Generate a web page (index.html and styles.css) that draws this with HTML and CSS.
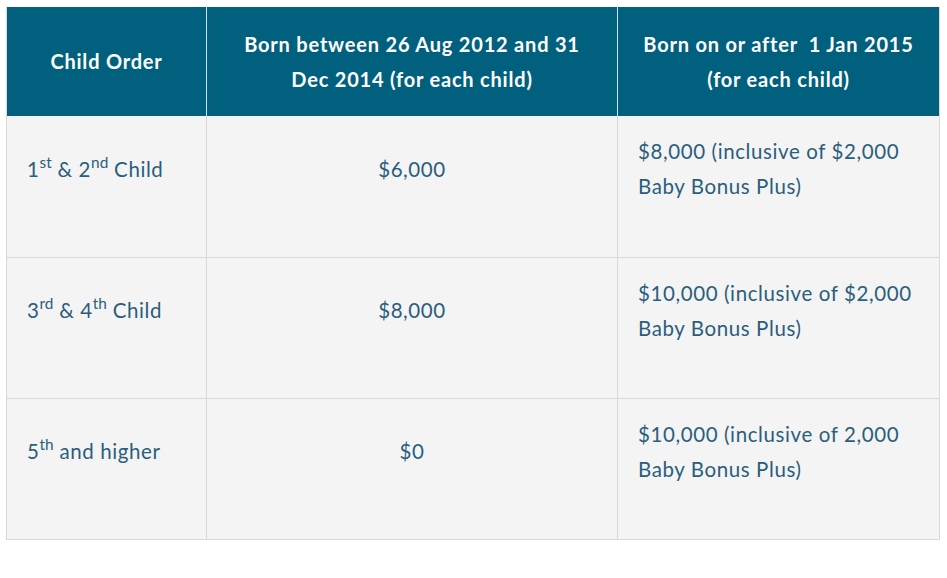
FILE: index.html
```html
<!DOCTYPE html>
<html>
<head>
<meta charset="utf-8">
<link rel="stylesheet" href="styles.css">
</head>
<body>
<table class="grant">
  <colgroup>
    <col class="c1"><col class="c2"><col class="c3">
  </colgroup>
  <thead>
    <tr>
      <th>Child Order</th>
      <th>Born between 26 Aug 2012 and 31<br>Dec 2014 (for each child)</th>
      <th>Born on or after&nbsp; 1 Jan 2015<br>(for each child)</th>
    </tr>
  </thead>
  <tbody>
    <tr>
      <td>1<sup>st</sup> &amp; 2<sup>nd</sup> Child</td>
      <td class="mid">$6,000</td>
      <td>$8,000 (inclusive of $2,000<br>Baby Bonus Plus)</td>
    </tr>
    <tr>
      <td>3<sup>rd</sup> &amp; 4<sup>th</sup> Child</td>
      <td class="mid">$8,000</td>
      <td>$10,000 (inclusive of $2,000<br>Baby Bonus Plus)</td>
    </tr>
    <tr>
      <td>5<sup>th</sup> and higher</td>
      <td class="mid">$0</td>
      <td>$10,000 (inclusive of 2,000<br>Baby Bonus Plus)</td>
    </tr>
  </tbody>
</table>
</body>
</html>
```
FILE: styles.css
```css
html, body {
  margin: 0;
  padding: 0;
  background: #ffffff;
}
body {
  padding: 7px 8px 0 6px;
  font-family: "Lato", "Open Sans", sans-serif;
}
.grant {
  border-collapse: collapse;
  width: 933px;
  table-layout: fixed;
  border: 1px solid #d9d9d9;
  border-top: none;
}
.c1 { width: 200px; }
.c2 { width: 411px; }
.c3 { width: 322px; }
.grant th {
  background: #01607d;
  color: #ffffff;
  font-weight: 700;
  font-size: 20px;
  letter-spacing: 0.8px;
  line-height: 35px;
  height: 109px;
  box-sizing: border-box;
  padding: 19px 10px;
  text-align: center;
  vertical-align: middle;
  border-left: 1px solid #cfe0e6;
  white-space: nowrap;
}
.grant th:first-child { border-left: none; }
.grant td {
  background: #f4f4f4;
  color: #2a5e7c;
  font-size: 20.5px;
  letter-spacing: 0.6px;
  line-height: 35px;
  height: 141px;
  box-sizing: border-box;
  padding: 18px 20px 52px;
  vertical-align: middle;
  text-align: left;
  border: 1px solid #d9d9d9;
  border-top: none;
  white-space: nowrap;
}
.grant td.mid { text-align: center; }
.grant sup {
  font-size: 0.75em;
  letter-spacing: 0;
  line-height: 0;
  vertical-align: 0.6em;
}
```
